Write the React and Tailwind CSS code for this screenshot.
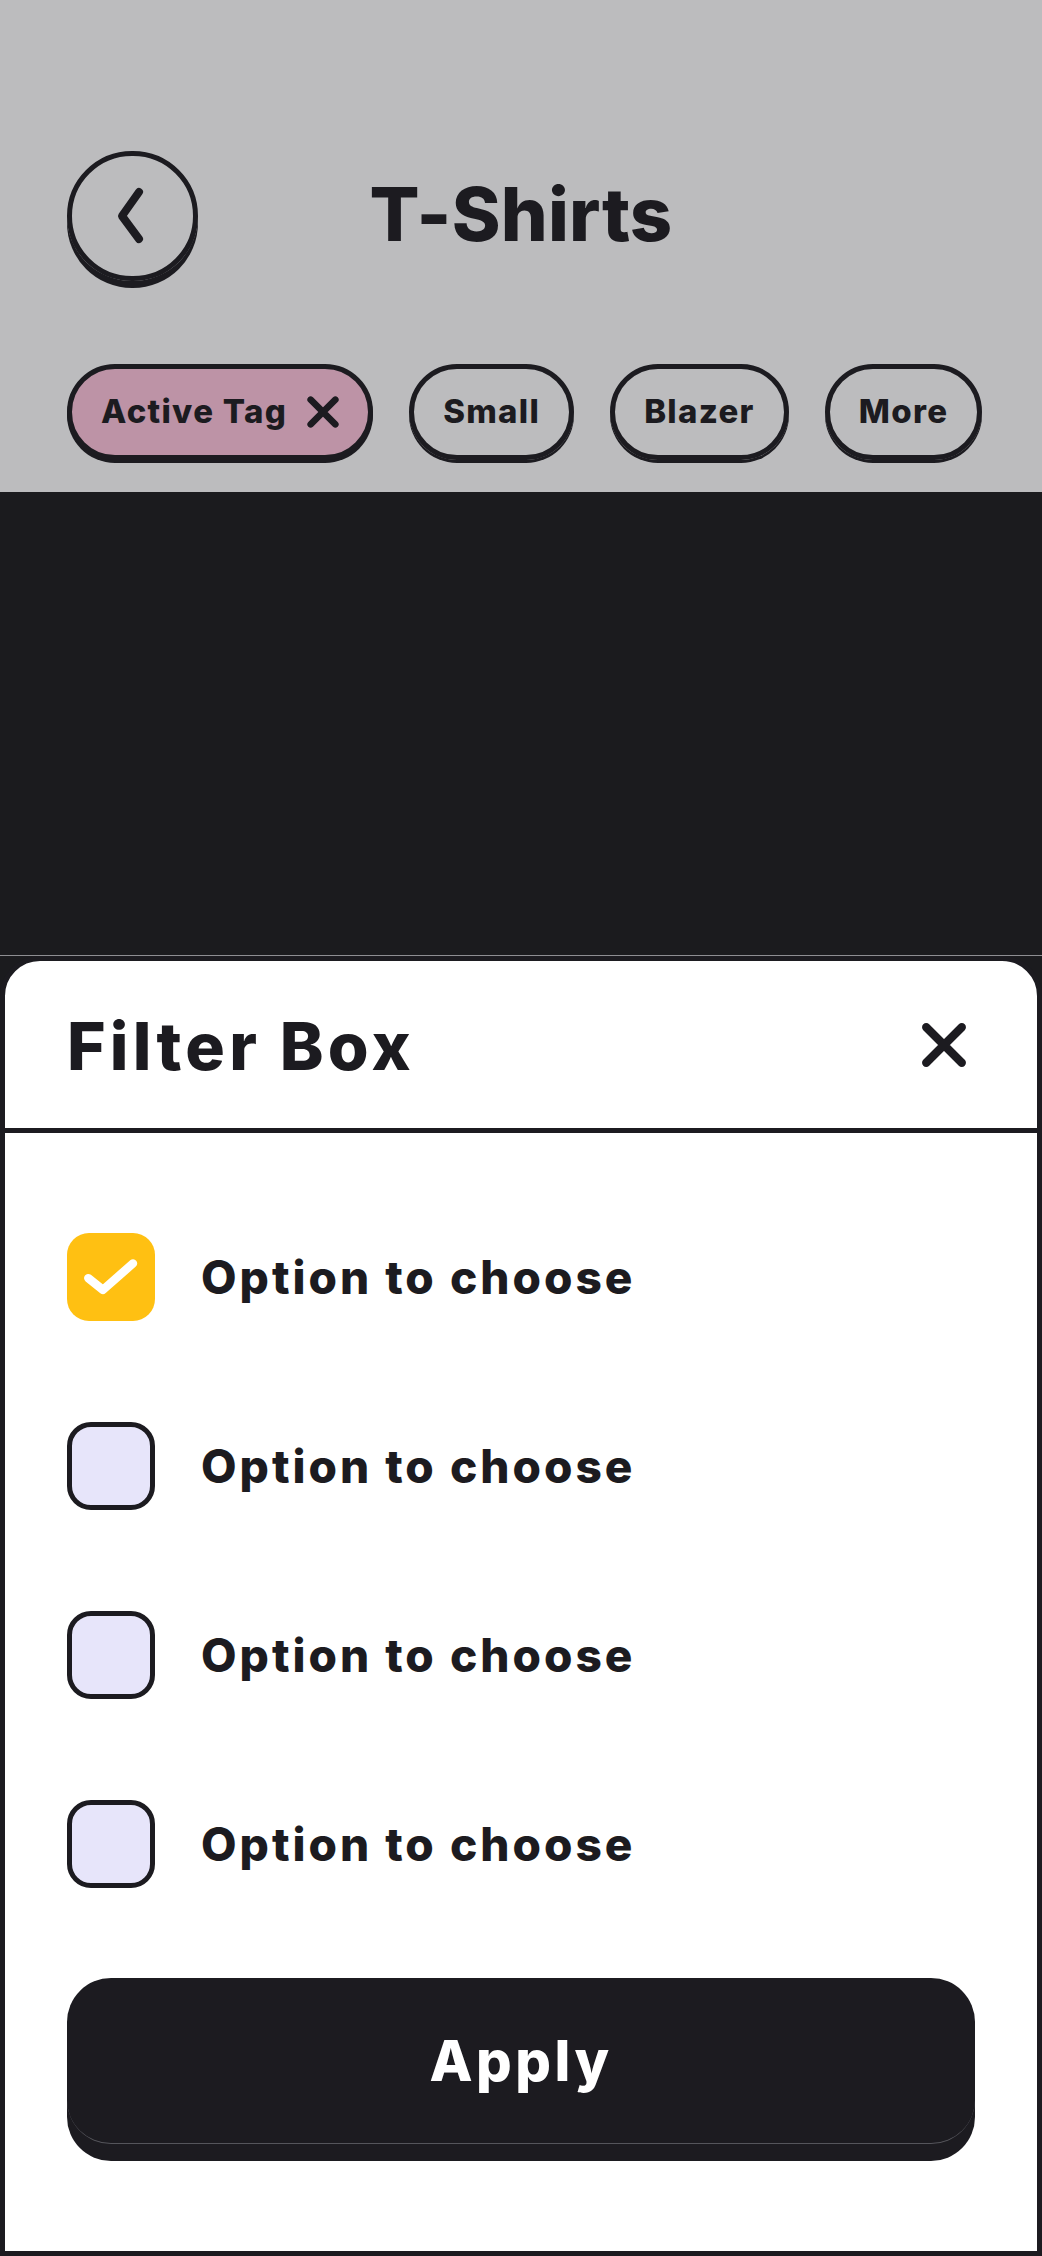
import React from "react";

const ink = "#1c1b20";

const Cross = ({ size, stroke, className }) => (
  <svg width={size} height={size} viewBox="0 0 44 44" className={className} fill="none">
    <path d="M5 5L39 39M39 5L5 39" stroke={ink} strokeWidth={stroke} strokeLinecap="round" />
  </svg>
);

const Tag = ({ label, active }) => (
  <div
    className={`flex items-center shrink-0 gap-[20px] h-[96px] px-[29px] rounded-full border-[5px] border-[#1c1b20] shadow-[0_3px_0_#1c1b20] ${
      active ? "bg-[#bd93a6]" : ""
    }`}
  >
    <span className="whitespace-nowrap text-[33px] font-extrabold text-[#1c1b20] tracking-[1.3px]">{label}</span>
    {active && <Cross size={32} stroke={9} className="shrink-0" />}
  </div>
);

const Option = ({ checked }) => (
  <div className="flex items-center gap-[46px] h-[88px]">
    {checked ? (
      <div className="w-[88px] h-[88px] rounded-[22px] bg-[#ffc012] flex items-center justify-center">
        <svg width="88" height="88" viewBox="0 0 24 24" fill="none">
          <path d="M5.8 12.3L9.8 15.5L18 8.3" stroke="#fff" strokeWidth="2.3" strokeLinecap="round" strokeLinejoin="round" />
        </svg>
      </div>
    ) : (
      <div className="w-[88px] h-[88px] rounded-[24px] bg-[#e7e5fa] border-[5px] border-[#1c1b20]" />
    )}
    <span className="text-[46px] font-extrabold text-[#1c1b20] tracking-[3px]">Option to choose</span>
  </div>
);

export default function App() {
  const tags = ["Small", "Blazer", "More"];

  return (
    <div
      className="w-[1042px] h-[2256px] flex flex-col bg-[#1b1b1e] overflow-hidden"
      style={{ fontFamily: "Inter, 'Noto Sans', sans-serif" }}
    >
      <header className="h-[492px] bg-[#bcbcbe] px-[67px] pt-[151px]">
        <div className="flex items-center">
          <button className="w-[131px] h-[130px] rounded-full border-[5px] border-[#1c1b20] shadow-[0_7px_0_#1c1b20] flex items-center justify-center shrink-0">
            <svg width="48" height="60" viewBox="0 0 48 60" fill="none">
              <path d="M30 6L13 30L30 53" stroke={ink} strokeWidth="8" strokeLinecap="round" strokeLinejoin="round" />
            </svg>
          </button>
          <h1 className="flex-1 text-center text-[74px] font-extrabold text-[#1c1b20] tracking-[0.2px] leading-none pb-[4px]">
            T-Shirts
          </h1>
          <div className="w-[131px] shrink-0" />
        </div>
        <div className="flex gap-[36px] mt-[83px]">
          <Tag label="Active Tag" active />
          {tags.map((t) => (
            <Tag key={t} label={t} />
          ))}
        </div>
      </header>

      <div className="flex-1" />
      <div className="h-px bg-[#8e8e92]" />

      <section className="h-[1300px] bg-white border-[5px] border-[#1c1b20] rounded-t-[40px] flex flex-col">
        <div className="h-[172px] border-b-[5px] border-[#1c1b20] flex items-center justify-between pl-[62px] pr-[70px]">
          <h2 className="text-[66px] font-extrabold text-[#1c1b20] tracking-[4.2px] leading-none pt-[2px]">Filter Box</h2>
          <Cross size={46} stroke={8} />
        </div>

        <div className="flex flex-col gap-[101px] px-[62px] pt-[100px]">
          <Option checked />
          <Option />
          <Option />
          <Option />
        </div>

        <div className="px-[62px] pt-[90px]">
          <button className="w-full h-[166px] rounded-[44px] bg-[#1c1b20] border-b border-[#55555b] shadow-[0_17px_0_#1c1b20] text-white text-[56px] font-extrabold tracking-[3.5px]">
            Apply
          </button>
        </div>
      </section>
    </div>
  );
}
